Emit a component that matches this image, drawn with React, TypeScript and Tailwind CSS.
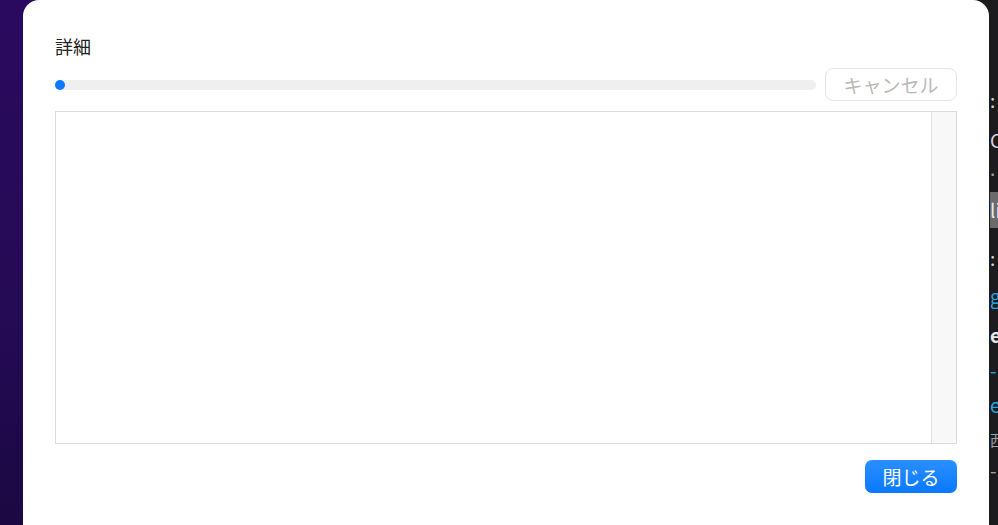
import React from 'react';

const peeks = [
  { text: ':', top: 'mt-[89px]', cls: 'text-gray-300' },
  { text: 'C', top: 'mt-[18px]', cls: 'text-gray-300' },
  { text: '.', top: 'mt-[6px]', cls: 'text-gray-400' },
  { text: 'li', top: 'mt-[13px]', cls: 'text-gray-200 bg-[#6b6b6b] py-[7px]' },
  { text: ':', top: 'mt-[19px]', cls: 'text-gray-300' },
  { text: 'g', top: 'mt-[16px]', cls: 'text-[#2aa3e0]' },
  { text: 'et', top: 'mt-[17px]', cls: 'text-gray-200 font-bold' },
  { text: '-', top: 'mt-[13px]', cls: 'text-[#2aa3e0]' },
  { text: 'e', top: 'mt-[13px]', cls: 'text-[#2aa3e0]' },
  { text: '西', top: 'mt-[13px]', cls: 'text-gray-400 text-[15px]' },
  { text: '-', top: 'mt-[8px]', cls: 'text-gray-400' },
];

export default function App() {
  return (
    <div
      className="relative w-[998px] h-[525px] overflow-hidden bg-[linear-gradient(to_right,#2a0a5e_50%,#1c1c1e_50%)]"
      style={{ fontFamily: '"Noto Sans CJK JP", "Noto Sans", sans-serif' }}
    >
      {/* desktop behind the sheet */}
      <div className="absolute left-0 top-0 w-[30px] h-[525px] bg-[linear-gradient(to_bottom,#2a0a5e,#250a55_60%,#1b0842)]" />
      <div className="absolute left-[987px] top-0 w-[11px] h-[525px] bg-[#1c1c1e] flex flex-col pl-[3px] text-[19px] leading-[22px] overflow-hidden">
        {peeks.map((p, i) => (
          <span key={i} className={`${p.top} ${p.cls} whitespace-nowrap`}>
            {p.text}
          </span>
        ))}
      </div>

      {/* sheet */}
      <div className="relative ml-[23px] w-[966px] h-[540px] bg-white rounded-[16px] px-[32px] pt-[34px] flex flex-col">
        <div className="text-[18px] leading-[24px] text-[#222]">詳細</div>

        <div className="mt-[10px] flex items-center gap-[9px]">
          <div className="flex-1 h-[10px] rounded-full bg-[#efefef] relative">
            <div className="w-[10px] h-[10px] rounded-full bg-[#0a7aff]" />
          </div>
          <button className="w-[132px] h-[33px] rounded-[8px] border border-[#e6e6e6] bg-white text-[19px] text-[#b9b9b9] leading-none">
            キャンセル
          </button>
        </div>

        <div className="mt-[10px] h-[333px] border border-[#dcdcdc] flex">
          <div className="flex-1 bg-white" />
          <div className="w-[25px] bg-[#f8f8f8] border-l border-[#e2e2e2]" />
        </div>

        <div className="mt-[16px] flex justify-end">
          <button className="w-[92px] h-[33px] rounded-[7px] bg-[linear-gradient(to_bottom,#2a90ff,#0a78ff)] text-white text-[19px] leading-none">
            閉じる
          </button>
        </div>
      </div>
    </div>
  );
}
